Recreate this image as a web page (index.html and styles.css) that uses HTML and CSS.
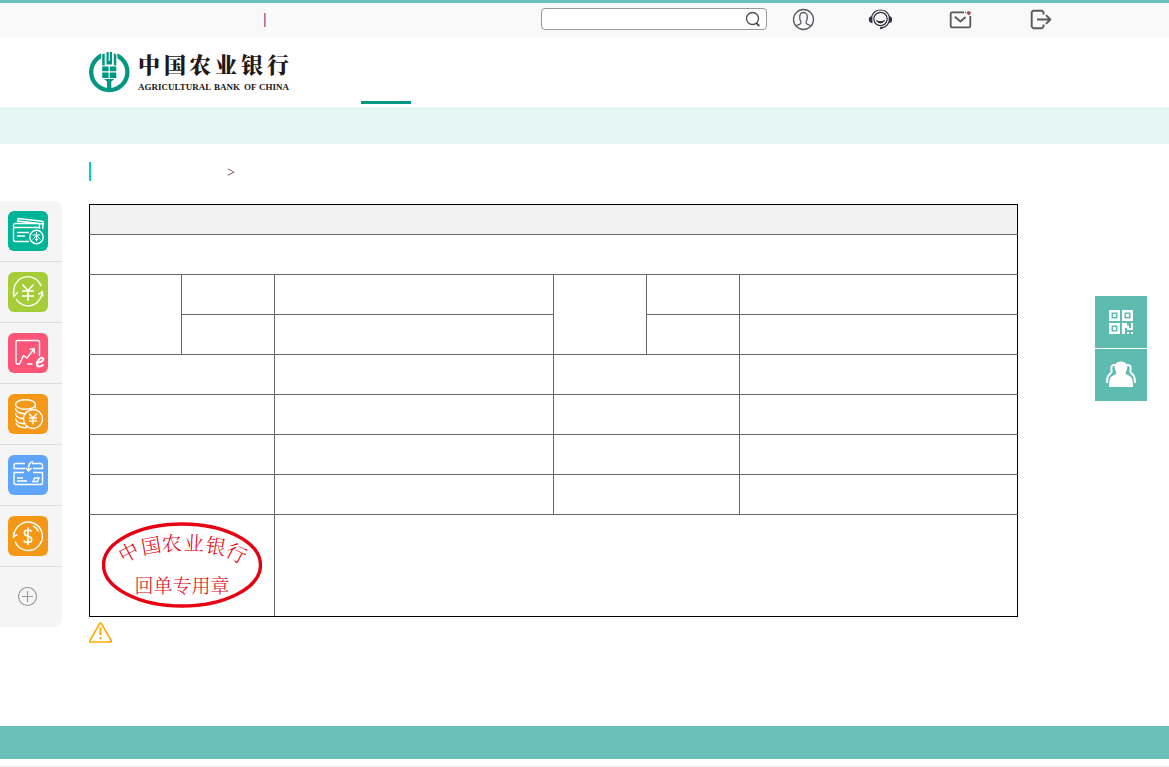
FILE: index.html
```html
<!DOCTYPE html>
<html lang="zh-CN">
<head>
<meta charset="utf-8">
<meta name="viewport" content="width=device-width, initial-scale=1">
<title>中国农业银行</title>
<link rel="stylesheet" href="styles.css">
</head>
<body>
<div class="topbar">
  <div class="wrap topbar-row">
    <span class="divider">|</span>
    <form class="search">
      <input class="search-input" type="text" aria-label="搜索">
      <button class="icon-button" type="button" aria-label="搜索">
        <svg width="16" height="16" viewBox="0 0 16 16" fill="none" stroke="#4c4c52" stroke-width="1.3"><circle cx="7.500" cy="7.500" r="6"/><path d="M11.300 12l3 3" stroke-width="1.8"/></svg>
      </button>
    </form>
    <button class="icon-button user" type="button" aria-label="用户">
      <svg width="24" height="24" viewBox="0 0 24 24" fill="none" stroke="#5b5966" stroke-width="1.3"><circle cx="11.500" cy="12.500" r="10"/><path d="M4.200 19c1.200-1.700 4-1.200 4.700-2.700.6-1.300-.9-2.500-1.100-4.700C7.300 7.600 8.600 5.500 11.500 5.500s4.200 2 3.700 6.100c-.2 2.200-1.700 3.400-1.100 4.700.7 1.500 3.500 1 4.700 2.700"/></svg>
    </button>
    <div class="actions">
      <button class="icon-button" type="button" aria-label="客服">
        <svg width="24" height="24" viewBox="0 -1 24 24" fill="none" stroke="#302f3d" stroke-width="1.2"><circle cx="12.500" cy="11" r="6.700"/><path d="M3.800 8C5.500 4 8.500 2 12.500 2s7 2 8.700 6M21 14c-1.500 3.700-4.500 5.700-8 5.700"/><path d="M9 13c1.500 2.400 5.500 2.400 7 0-2 .8-5 .8-7 0z" fill="#302f3d"/><path d="M3.800 8.700C.6 9.300.6 13.800 3.800 14.500zM21.200 8.700c3.200.6 3.200 5.100 0 5.800z" fill="#302f3d"/><path d="M12 20h2.500" stroke-width="1.800"/></svg>
      </button>
      <button class="icon-button" type="button" aria-label="消息">
        <svg width="24" height="24" viewBox="0 -1 24 24" fill="none" stroke="#59595b" stroke-width="1.8" stroke-linejoin="round"><path d="M16 4.300H4Q2.700 4.300 2.700 5.600V18q0 1.300 1.300 1.300h17q1.300 0 1.300-1.300V8"/><path d="M6.800 8.800l5.700 4.700 5-4.500"/><path d="M20.300 4l1.700.6-.8 1.700-1.500-1z" fill="#a84b4b" stroke="#a84b4b"/><path d="M17 4.300h1.200" stroke="#4b8ae0"/></svg>
      </button>
      <button class="icon-button" type="button" aria-label="退出">
        <svg width="24" height="24" viewBox="0 -1 24 24" fill="none" stroke="#59595b" stroke-width="1.900" stroke-linejoin="round"><path d="M15.500 6.500V4.200L14 2.700H5.200L3.700 4.200v14.500l1.500 1.500H14l1.500-1.500v-2.200"/><path d="M9 11.500h13M18 7.200l4.300 4.300-4.300 4.300"/></svg>
      </button>
    </div>
  </div>
</div>

<header class="header">
  <div class="wrap header-row">
    <a class="logo" href="#" aria-label="中国农业银行">
      <svg width="212" height="54" viewBox="0 -12 212 54">
        <circle cx="20.300" cy="21" r="18.100" fill="none" stroke="#009882" stroke-width="4.300"/>
        <path d="M12.200 0h16.200V16H12.200z" fill="#fff"/>
        <path d="M13.200 3.500l2.500-1.300v12.300h-2.500zM24.800 2.200l2.500 1.300v11h-2.500zM17.500 1h5.500v12.500h-5.500z" fill="#009882"/>
        <path d="M19.700 1h1.100v9h-1.100z" fill="#fff"/>
        <path d="M13.200 15.500h6.400v4.800h-6.400zM20.700 15.500h6.600v4.800h-6.600zM13.200 21.500h6.400V27h-6.400zM20.700 21.500h6.600V27h-6.600zM15 28h10.500l-3.200 2.500V39h-4.300v-8.500z" fill="#009882"/>
        <text class="logo-cn" x="49 75 100 126 152 178" y="22">中国农业银行</text>
        <text class="logo-en" y="39"><tspan x="49">AGRICULTURAL</tspan> <tspan x="125">BANK</tspan> <tspan x="155">OF</tspan> <tspan x="170">CHINA</tspan></text>
      </svg>
    </a>
    <nav class="tabs"><a class="tab" href="#" aria-label="首页"></a></nav>
  </div>
</header>
<div class="subnav"></div>

<div class="page">
  <nav class="shortcuts">
    <a class="shortcut" href="#" aria-label="账户"><svg class="teal" viewBox="0 0 40 40"><path d="M9.500 11l.7-3.500L34 10.300q1.500.3 1.300 1.700l-.6 6M10 10l25 3M7.500 12.500h22q2 0 2 2V18M21 30.500H7.500q-2 0-2-2v-14q0-2 2-2M6 16.500h25M9 21.500h12M9 25h8"/><circle cx="28.500" cy="26" r="6.700"/><path d="M24.700 24h7.600M28.500 21v9.500M28.300 24.500l-3.500 4M28.700 24.500l3.500 4M27 28.300h3" stroke-width="1"/></svg></a>
    <a class="shortcut" href="#" aria-label="转账"><svg class="lime" viewBox="0 0 40 40"><path d="M6 21A14 14 0 0 1 33 14M34 19A14 14 0 0 1 8 27M5 19.500l1 5 4-4.500M35 24.500l-.8-5-4 3"/><path d="M14.500 12.500l5.500 6 5.500-6M20 18.500V29M14 19h12M14 24h12" stroke-width="1.600"/></svg></a>
    <a class="shortcut" href="#" aria-label="投资"><svg class="pink" viewBox="0 0 40 40"><path d="M31.500 23V9q0-1.500-1.500-1.500H9.500Q8 7.500 8 9v20.500Q8 31 9.500 31h2l4-8.500 3.500 2.500 7-9M21.500 16.500l4.500-1 .5 5M19 31h5.500"/><path d="M28 29.500c4.500 1 8.500-2.500 7-4.300-1.700-1.700-6 1.800-6 6 0 3 4 2.800 6.500.3" stroke-width="2"/></svg></a>
    <a class="shortcut" href="#" aria-label="存款"><svg class="orange" viewBox="0 0 40 40"><ellipse cx="17.500" cy="10.500" rx="10" ry="4.700"/><path d="M7.500 14c0 4.500 7 6.500 11 5M7.500 19c0 3.500 4 5.500 8.500 5.700M7.500 24c0 3.500 4 5.500 8.500 5.700M8 29c1 3 5 5 11 4.500M27.500 10.500v4"/><circle cx="25" cy="25" r="9.500"/><path d="M21 19.500l4 4.500 4-4.500M25 24v6.500M21 24h8M21 27h8" stroke-width="1.300"/></svg></a>
    <a class="shortcut" href="#" aria-label="信用卡"><svg class="blue" viewBox="0 0 40 40"><path d="M17 8.500H8Q6 8.500 6 10.500v3h11M24 8.500h8.500q2 0 2 2v3H25M16 17.500H6v10q0 2 2 2h24.500q2 0 2-2v-10H25M9 23h6M9 26h10M26.500 23h4.500l-1.500 3.500H25zM25 6.500q-5 1-4.500 9M17.700 13l2.800 3 3-3"/></svg></a>
    <a class="shortcut" href="#" aria-label="外汇"><svg class="orange" viewBox="0 0 40 40"><path d="M6 20A14.200 14.200 0 1 1 7 25.500M5.500 16.500V21l4-2.500M25 10q3.500 1.500 5.500 5.500"/><path d="M23.700 15.500q-1-1.500-3.700-1.500-3.700 0-3.700 3 0 2.200 3.700 3.200t3.700 3.300q0 3-3.700 3t-4-2M20 11.500v17.500" stroke-width="1.700"/></svg></a>
    <button class="shortcut add" type="button" aria-label="添加"><svg viewBox="0 0 20 20" fill="none"><circle cx="9.500" cy="9.500" r="9"/><path d="M9.500 4v11M4 9.500h11"/></svg></button>
  </nav>

  <main class="content">
    <div class="crumbs"><span class="crumb-arrow">&gt;</span></div>
    <table class="receipt">
      <colgroup><col class="first"><col class="narrow"><col class="wide"><col class="narrow"><col class="narrow"><col class="last"></colgroup>
      <thead><tr><th colspan="6"></th></tr></thead>
      <tbody>
        <tr><td colspan="6"></td></tr>
        <tr><td rowspan="2"></td><td></td><td></td><td rowspan="2"></td><td></td><td></td></tr>
        <tr><td></td><td></td><td></td><td></td></tr>
        <tr><td colspan="2"></td><td></td><td colspan="2"></td><td></td></tr>
        <tr><td colspan="2"></td><td></td><td colspan="2"></td><td></td></tr>
        <tr><td colspan="2"></td><td></td><td colspan="2"></td><td></td></tr>
        <tr><td colspan="2"></td><td></td><td colspan="2"></td><td></td></tr>
        <tr class="seal-row">
          <td colspan="2">
            <svg class="seal" width="160" height="86" viewBox="0 0 160 86">
              <ellipse cx="80" cy="43" rx="78.500" ry="41" fill="none" stroke="#e60012" stroke-width="3.400"/>
              <text class="seal-text" x="21.200 40.500 60 81.600 102.800 122.300" y="41.400 32.700 29.300 28.100 29.800 33" rotate="-28 -10 -4 3 10 28">中国农业银行</text>
              <text class="seal-text small" x="80" y="71" text-anchor="middle">回单专用章</text>
            </svg>
          </td>
          <td colspan="4"></td>
        </tr>
      </tbody>
    </table>
    <svg class="warning" width="24" height="22" viewBox="0 0 24 22" fill="none" stroke="#ffab00" stroke-width="1.700" stroke-linejoin="round"><path d="M11.500 1.200Q12.200 1.200 12.700 2.100L22 18.300Q22.700 20 21 20H2Q.3 20 1 18.300L10.300 2.100Q10.800 1.200 11.500 1.200z"/><path d="M11.500 5.500V13M11.500 15v2.200" stroke-width="2"/></svg>
  </main>

  <aside class="float-tools">
    <button class="float-tool" type="button" aria-label="二维码"><svg width="24" height="24" viewBox="0 0 24 24" fill="#fff"><path fill-rule="evenodd" d="M0 0h11v11H0zM2.500 2.500v6h6v-6zM13 0h11v11H13zM15.500 2.500v6h6v-6zM0 13h11v11H0zM2.500 15.500v6h6v-6zM4 4h3v3H4zM17 4h3v3h-3zM4 17h3v3H4z"/><path d="M13 13h5v2.500h2V18h2v-5h2v7h-6v-2h-2v6h-3zM18 22h2v2h-2zM22 22h2v2h-2z"/></svg></button>
    <button class="float-tool" type="button" aria-label="联系人"><svg width="30" height="28" viewBox="0 0 30 28" fill="none" stroke="#fff" stroke-width="2"><path d="M9 4C5.500 3.500 4.500 6.500 5.700 10c.7 2-3.200 3-4 6C1 18.500 1 20 1 22M21 4c3.500-.5 4.500 2.500 3.300 6-.7 2 3.200 3 4 6 .7 2.500.7 4 .7 6"/><path d="M15 .5c4.700 0 7 3.200 6.200 7-.5 2.700-2 3.500-1.500 5 .8 1.500 5.300 2 6.300 5 .8 2.500 1 5 1 8.500H3c0-3.500.2-6 1-8.500 1-3 5.500-3.500 6.300-5 .5-1.500-1-2.300-1.500-5C8 3.700 10.300.5 15 .5z" fill="#fff" stroke="none"/></svg></button>
  </aside>
</div>

<footer class="footer"></footer>
<div class="page-end"></div>
</body>
</html>
```
FILE: styles.css
```css
* { box-sizing: border-box; }

body {
  margin: 0;
  background: #fff;
  color: #333;
  font: 14px/20px "Liberation Sans", "Noto Sans CJK SC", sans-serif;
}

button {
  padding: 0;
  border: 0;
  background: none;
  cursor: pointer;
}

svg { display: block; }

.wrap {
  max-width: 991px;
  margin: 0 auto;
}

.topbar {
  padding-bottom: 2px;
  border-top: 3px solid #6bbfb9;
  background: #f9f9f9;
}

.topbar-row {
  display: flex;
  align-items: center;
  height: 32px;
}

.divider {
  flex: 0 1 278px;
  margin-left: 174px;
  color: #6c4a8c;
}

.search {
  display: flex;
  align-items: center;
  flex: 0 1 226px;
  min-width: 0;
  height: 22px;
  padding-right: 5px;
  border: 1px solid #999;
  border-radius: 4px;
  background: #fff;
}

.search-input {
  flex: 1;
  min-width: 0;
  height: 20px;
  border: 0;
  outline: 0;
  background: none;
}

.user { margin: 0 52px 0 25px; }

.actions {
  display: flex;
  gap: 56px;
}

.header-row {
  display: flex;
  align-items: flex-end;
  height: 70px;
}

.logo { margin-bottom: 14px; }

.logo-cn {
  fill: #231815;
  font: 900 22px "Noto Serif CJK SC", "Noto Sans CJK SC", serif;
}

.logo-en {
  fill: #231815;
  font: bold 9px "Liberation Serif", serif;
}

.tabs { margin: 0 0 3px 60px; }

.tab {
  display: block;
  width: 50px;
  height: 40px;
  border-bottom: 3px solid #009882;
}

.subnav {
  height: 37px;
  background: #e6f6f5;
}

.page {
  display: grid;
  grid-template-columns: minmax(74px, 1fr) minmax(0, 991px) minmax(74px, 1fr);
  align-items: start;
  min-height: 582px;
}

.shortcuts {
  width: 62px;
  margin-top: 57px;
  border-radius: 0 8px 8px 0;
  background: #f5f5f5;
}

.shortcut {
  display: block;
  padding: 10px 8px;
  border-bottom: 1px solid #dcdcdc;
}

.shortcut svg {
  width: 40px;
  height: 40px;
  border-radius: 6px;
  fill: none;
  stroke: #fff;
  stroke-width: 1.4;
}

.shortcut .teal { background: #00b497; }
.shortcut .lime { background: #a5cd39; }
.shortcut .pink { background: #fb5578; }
.shortcut .orange { background: #f59817; }
.shortcut .blue { background: #5fa5fa; }

.shortcut.add {
  width: 100%;
  padding: 20px 18px;
  border-bottom: 0;
}

.shortcut.add svg {
  width: 20px;
  height: 20px;
  border-radius: 0;
  stroke: #999;
  stroke-width: 1.1;
}

.content { padding-top: 18px; }

.crumbs {
  height: 19px;
  margin-bottom: 23px;
  padding-left: 136px;
  border-left: 2px solid #00d2c3;
}

.crumb-arrow {
  color: #4c2a2a;
  font: 14px/20px "Liberation Serif", serif;
}

.receipt {
  width: 100%;
  max-width: 929px;
  border: 1px solid #000;
  border-collapse: collapse;
  table-layout: fixed;
}

.first { width: 9.9%; }
.narrow { width: 10%; }
.wide { width: 30%; }
.last { width: 29.9%; }

.receipt th,
.receipt td {
  height: 40px;
  padding: 0;
  border: 1px solid #666;
}

.receipt th {
  height: 30px;
  background: #f2f2f2;
}

.receipt tr > :first-child[colspan] { border-left-color: #000; }
.receipt td[rowspan]:first-child { border-left-color: #000; }
.receipt tr > :last-child { border-right-color: #000; }
.receipt th { border-top-color: #000; }

.receipt .seal-row td {
  height: 102px;
  padding-bottom: 2px;
  border-bottom-color: #000;
}

.seal { margin: 0 auto; }

.seal-text {
  fill: #e60012;
  font: 300 20px "Noto Serif CJK SC", "Noto Sans CJK SC", serif;
}

.seal-text.small { font-size: 19px; }

.warning { margin-top: 5px; }

.float-tools {
  display: flex;
  flex-direction: column;
  gap: 1px;
  justify-self: end;
  margin: 152px 22px 0 0;
}

.float-tool {
  display: grid;
  place-items: center;
  width: 52px;
  height: 52px;
  background: #5dbcaf;
}

.footer {
  height: 33px;
  background: #6bbfb9;
}

.page-end {
  height: 8px;
  border-bottom: 1px solid #eee;
}
```
